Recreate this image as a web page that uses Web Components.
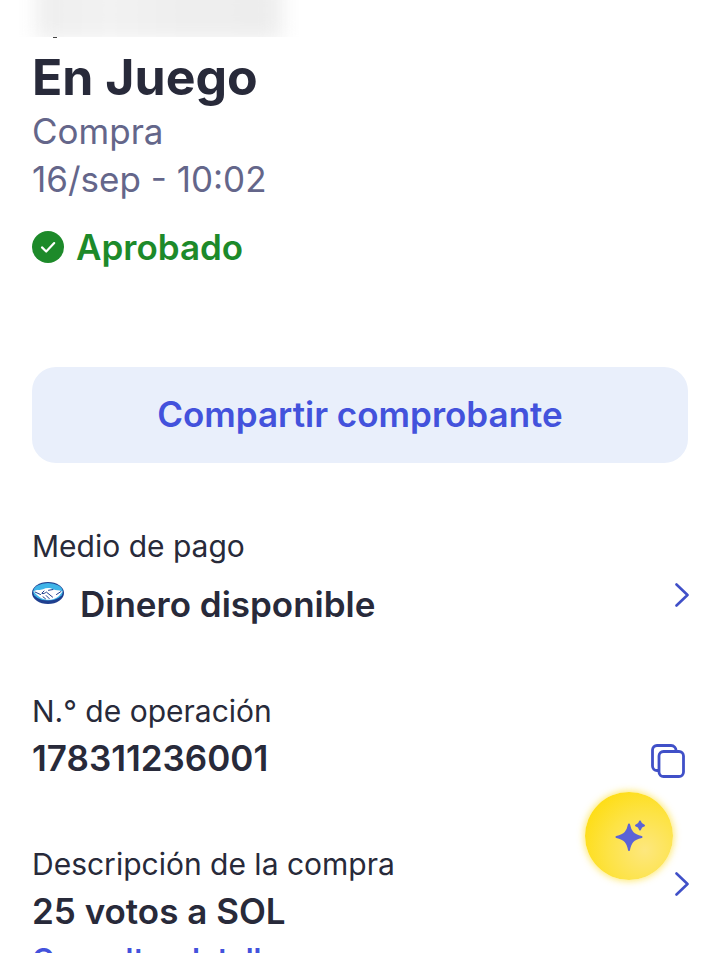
<!DOCTYPE html>
<html lang="es">
<head>
<meta charset="utf-8">
<title>Detalle de la compra</title>
<style>
    html, body { margin: 0; height: 953px; overflow: hidden; background: #fff; }
    body { position: relative; font-family: Inter, "Liberation Sans", sans-serif; color: #282a3a; }
</style>
</head>
<body>
<receipt-page>
    <receipt-header title="En Juego" kind="Compra" date="16/sep - 10:02"></receipt-header>
    <status-badge>Aprobado</status-badge>
    <share-button>Compartir comprobante</share-button>
    <detail-row label="Medio de pago" value="Dinero disponible" icon="chevron" logo style="--row-top:63px;--value-gap:16px;--icon-top:57px"></detail-row>
    <detail-row label="N.° de operación" value="178311236001" icon="copy" style="--row-top:65px;--value-gap:5px;--icon-top:53px"></detail-row>
    <detail-row label="Descripción de la compra" value="25 votos a SOL" icon="chevron" link="Consultar detalle" style="--row-top:64px;--value-gap:5px;--icon-top:28px"></detail-row>
</receipt-page>
<top-blur></top-blur>
<assist-fab></assist-fab>
<script>
// Small helper, each element only needs its markup
const define = (name, build) => {
    customElements.define(name, class extends HTMLElement {
        connectedCallback() {
            if (this.shadowRoot) return;
            this.attachShadow({ mode: 'open' }).innerHTML = build(this);
        }
    });
};

define('receipt-page', () => `<style>:host{display:block}</style><slot></slot>`);

define('receipt-header', (el) => `
    <style>
        :host { display: block; padding: 48px 32px 0; }
        h1 { margin: 0; font-size: 50px; line-height: 59px; font-weight: 700; color: #282a3a; }
        p { margin: 0; font-size: 35px; line-height: 48px; font-weight: 400; color: #64668a; }
    </style>
    <h1>${el.getAttribute('title')}</h1>
    <p>${el.getAttribute('kind')}</p>
    <p>${el.getAttribute('date')}</p>
`);

define('status-badge', () => `
    <style>
        :host { display: flex; align-items: center; gap: 12px; padding: 24px 32px 0; height: 40px;
            font-size: 35px; line-height: 40px; font-weight: 600; color: #1d8a2a; }
        svg { width: 32px; height: 32px; flex: none; }
    </style>
    <svg viewBox="0 0 32 32"><circle cx="16" cy="16" r="16" fill="#1d8a2a"/><path d="M10 16.400l4.200 4.100 8-8.400" fill="none" stroke="#fff" stroke-width="2.200" stroke-linecap="round" stroke-linejoin="round"/></svg>
    <slot></slot>
`);

define('share-button', () => `
    <style>
        :host { display: flex; align-items: center; justify-content: center; box-sizing: border-box;
            margin: 100px 32px 0; height: 96px; padding-bottom: 2px;
            border-radius: 24px; background: #e9effb; color: #4352dc;
            font-size: 35px; font-weight: 600; }
    </style>
    <slot></slot>
`);

define('detail-row', (el) => {
    const icons = {
        chevron: `<svg class="chev" width="16" height="24" viewBox="0 0 16 24"><path d="M2.500 1.500L13.500 12L2.500 22.500" fill="none" stroke="#4050c8" stroke-width="2.600" stroke-linecap="round" stroke-linejoin="round"/></svg>`,
        copy: `<svg class="copy" width="34" height="34" viewBox="0 0 34 34"><path d="M7 26.500H6a4.500 4.500 0 0 1-4.500-4.500V6A4.500 4.500 0 0 1 6 1.500h14A5 5 0 0 1 25 7" fill="none" stroke="#4050c8" stroke-width="2.800"/><rect x="8" y="7.500" width="24.500" height="25" rx="4.500" fill="none" stroke="#4050c8" stroke-width="2.800"/></svg>`
    };
    const logo = el.hasAttribute('logo') ? `<svg class="logo" width="32" height="22" viewBox="0 0 32 22">
        <ellipse cx="16" cy="11" rx="16" ry="11" fill="#1f3f8f"/>
        <ellipse cx="16" cy="9.800" rx="14.800" ry="8.800" fill="#3fb4e8"/>
        <path d="M1.500 9.500C5 7 8 8.500 11 7.200 14 5.600 18 5.400 21 7.200 24 8.500 27 7.500 30.500 9.500L27 14C24 17 20 17.800 16 17.800 11.500 17.800 6.500 15.500 1.500 9.500Z" fill="#fff"/>
        <path d="M3 10l5.500 2.500M29 9.500L24.500 12.500M12 9l-2.200 2.300c1.500 1.100 3.200-.4 4.600-1.200l6.200 5M11 14.800l2.500 2M14.200 13.600l3 3M21 7.500l-4.500 .8" fill="none" stroke="#1f3f8f" stroke-width="1" stroke-linecap="round"/>
    </svg>` : '';
    const link = el.getAttribute('link');
    return `
    <style>
        :host { display: flex; padding: 0 30px 0 32px; margin-top: var(--row-top, 0); }
        .text { flex: 1; min-width: 0; }
        .label { font-size: 30px; line-height: 40px; color: #282a3a; }
        .value { display: flex; gap: 16px; margin-top: var(--value-gap, 5px); font-size: 35px; line-height: 44px; font-weight: 600; color: #282a3a; }
        .logo { flex: none; }
        .link { margin-top: 6px; font-size: 30px; line-height: 40px; font-weight: 600; color: #4352dc; }
        svg.chev, svg.copy { flex: none; margin-top: var(--icon-top, 0); }
        svg.copy { margin-right: 5px; }
    </style>
    <div class="text">
        <div class="label">${el.getAttribute('label')}</div>
        <div class="value">${logo}<span>${el.getAttribute('value')}</span></div>
        ${link ? `<div class="link">${link}</div>` : ''}
    </div>
    ${icons[el.getAttribute('icon')] || ''}`;
});

// Blurred out strip over the top of the screen
define('top-blur', () => `
    <style>
        :host { display: block; position: absolute; left: 0; top: 0; width: 100%; height: 38px; }
        .clip { height: 37px; overflow: hidden; position: relative; }
        .bar { position: absolute; left: 36px; top: -20px; width: 246px; height: 60px; filter: blur(10px);
            background: linear-gradient(90deg, #eeeeee, #f2f2f2 30%, #eeeeee 60%, #ededed); }
        .tick { position: absolute; left: 53px; top: 37px; width: 4px; height: 1px; background: #444; }
    </style>
    <div class="clip"><div class="bar"></div></div>
    <div class="tick"></div>
`);

define('assist-fab', () => `
    <style>
        :host { display: block; position: absolute; left: 585px; top: 792px; width: 88px; height: 88px; border-radius: 50%;
            background: radial-gradient(circle at 68% 66%, #fde77e 0%, #fde345 45%, #fedd14 80%, #fddc1c 100%);
            box-shadow: 0 0 7px 1px rgba(253, 224, 60, .75); }
        svg { position: absolute; left: 29px; top: 28px; }
    </style>
    <svg width="32" height="32" viewBox="0 0 32 32" fill="#5b63d6" stroke="#5b63d6" stroke-width="2" stroke-linejoin="round">
        <path d="M15 4.500C16.500 12 19 14.800 27.500 17 19 19.200 16.500 22 15 30 13.500 22 11 19.200 2.500 17 11 14.800 13.500 12 15 4.500Z"/>
        <path d="M26 1.500C26.500 4 27.500 5 30 5.500 27.500 6 26.500 7 26 9.500 25.500 7 24.500 6 22 5.500 24.500 5 25.500 4 26 1.500Z"/>
    </svg>
`);
</script>
</body>
</html>
